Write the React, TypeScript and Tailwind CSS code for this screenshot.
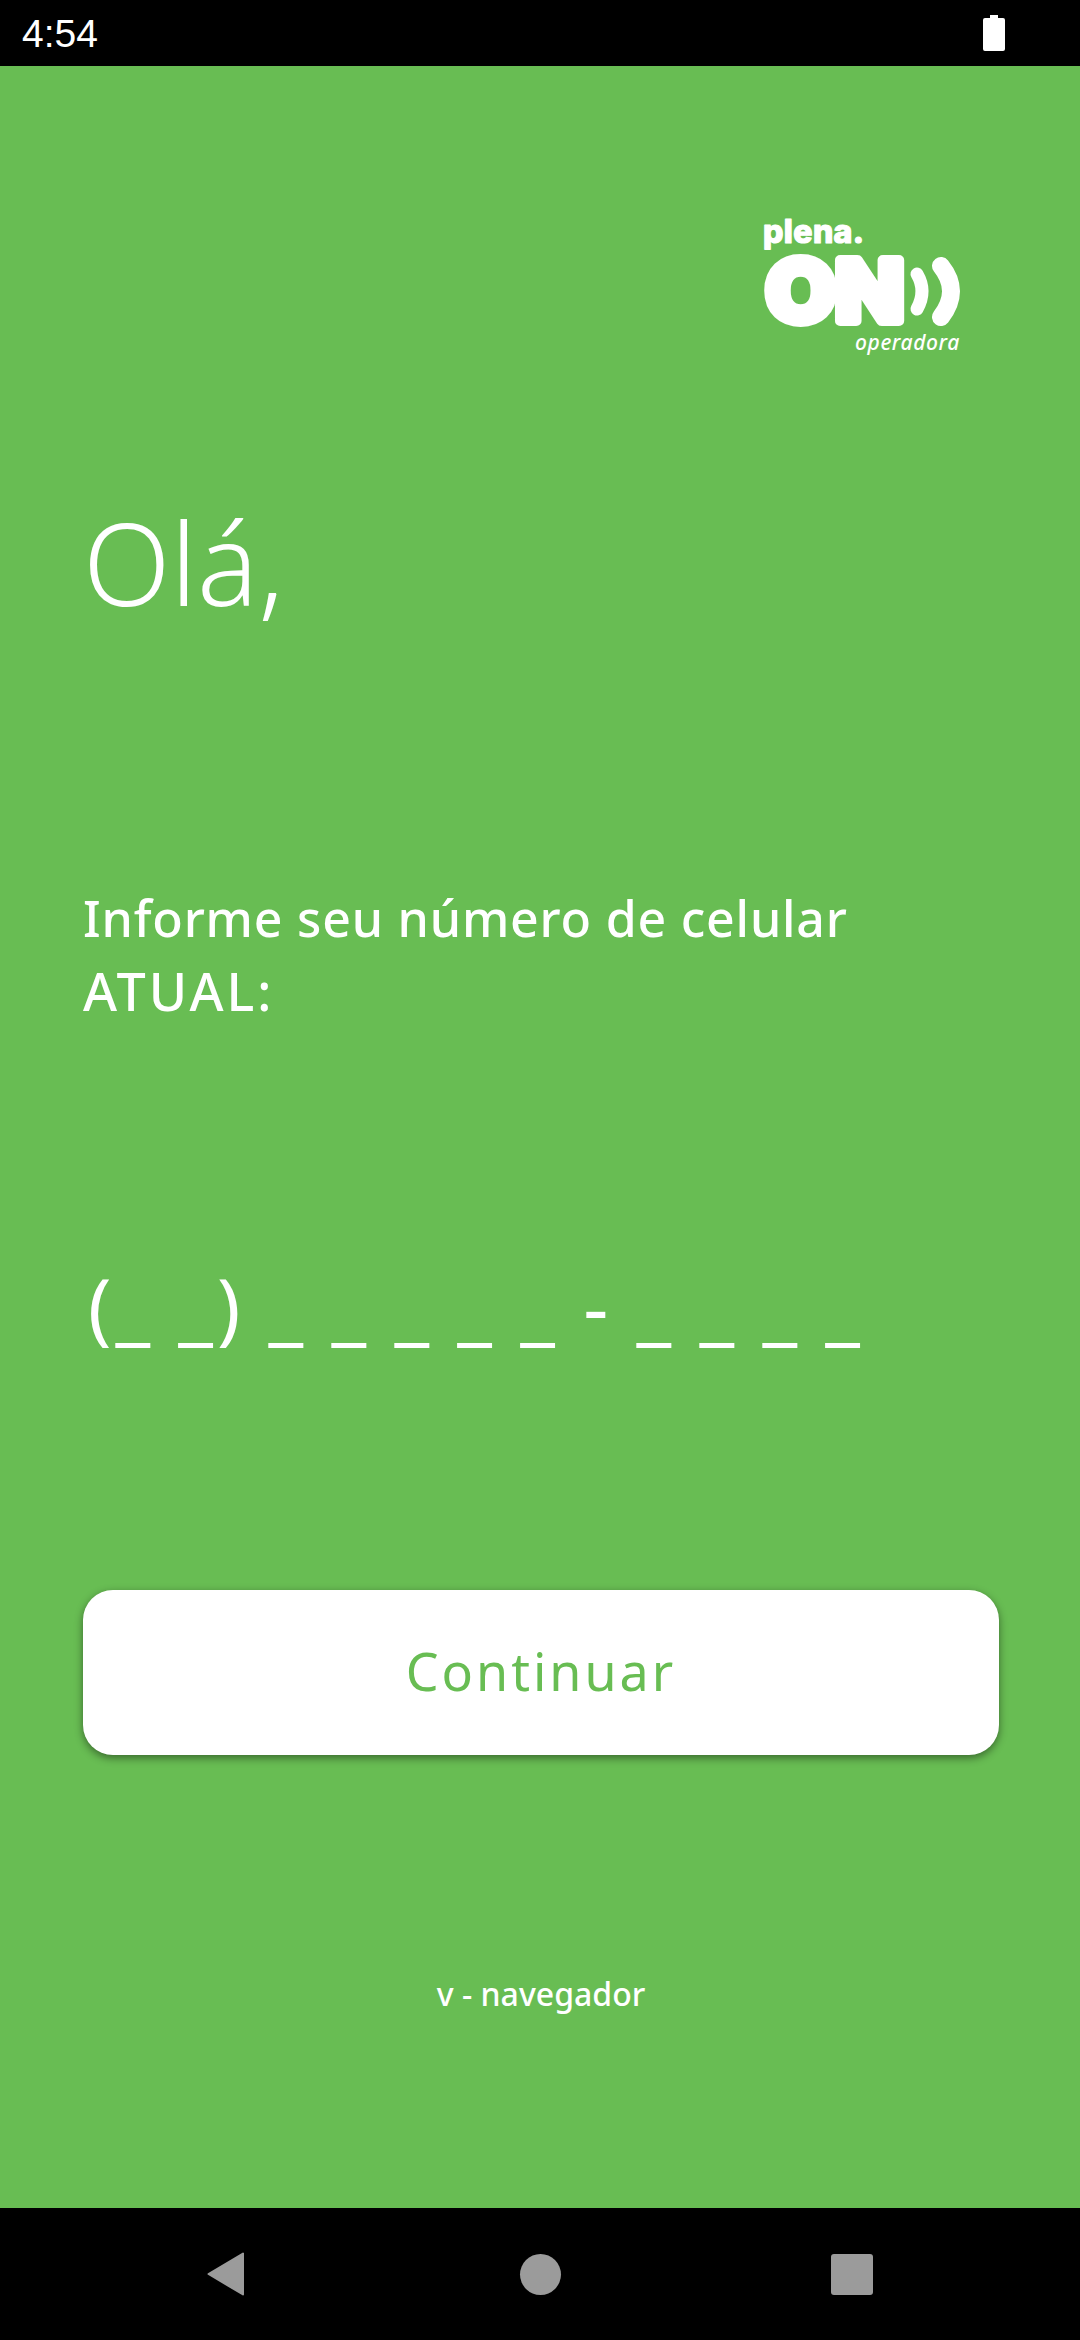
export default function App() {
  return (
    <div className="w-[1080px] h-[2340px] flex flex-col bg-[#68bd53] overflow-hidden" style={{ fontFamily: '"Noto Sans", sans-serif' }}>
      <div className="h-[66px] bg-black flex items-center justify-between pl-[22px] pr-[74px] shrink-0">
        <span className="text-white text-[39px] leading-none" style={{ fontFamily: '"Liberation Sans", sans-serif' }}>4:54</span>
        <svg width="24" height="36" viewBox="0 0 24 36" className="block">
          <path d="M8 0h8v3h5a2 2 0 0 1 2 2v29a2 2 0 0 1-2 2H3a2 2 0 0 1-2-2V5a2 2 0 0 1 2-2h5z" fill="#fff" />
        </svg>
      </div>
      <main className="flex-1 flex flex-col px-[83px] text-white">
        <div className="self-end mr-[37px] mt-[140px] w-[200px] h-[149px]">
          <svg width="200" height="149" viewBox="0 -14 200 149" className="block">
            <text x="3" y="23" fontFamily="Inter, sans-serif" fontWeight="800" fontSize="32" letterSpacing="0.4" fill="#fff" stroke="#fff" strokeWidth="1.2" strokeLinejoin="round">plena.</text>
            <text x="6" y="101" fontFamily="Inter, sans-serif" fontWeight="800" fontSize="84" fill="#fff" stroke="#fff" strokeWidth="10" strokeLinejoin="round" textLength="138" lengthAdjust="spacingAndGlyphs">ON</text>
            <path d="M157 54 Q167 71 157 89" fill="none" stroke="#fff" strokeWidth="13" strokeLinecap="round" />
            <path d="M181 46 Q201 71 181 97" fill="none" stroke="#fff" strokeWidth="18" strokeLinecap="round" />
            <text x="95" y="130" fontFamily="'Noto Sans', sans-serif" fontStyle="italic" fontWeight="500" fontSize="21" letterSpacing="0.6" fill="#fff">operadora</text>
          </svg>
        </div>
        <h1 className="mt-[137px] text-[114px] leading-[140px] font-light">Olá,</h1>
        <p className="mt-[249px] text-[50px] leading-[74px] tracking-[0.8px] font-medium">Informe seu número de celular<br /><span className="text-[52px] leading-[70px] tracking-[3px]">ATUAL:</span></p>
        <div className="mt-[227px] ml-[5px] h-[100px] text-[78px] leading-[100px] whitespace-pre tracking-[4px]">(_ _) _ _ _ _ _ - _ _ _ _</div>
        <button className="mt-[234px] w-[916px] h-[165px] shrink-0 pb-[4px] bg-white rounded-[30px] shadow-[0_3px_8px_rgba(0,0,0,0.45)] text-[#68bd53] text-[52px] tracking-[3px]">Continuar</button>
        <p className="mt-[217px] pl-[2px] text-center text-[32px] leading-[44px] font-medium">v - navegador</p>
      </main>
      <div className="h-[132px] bg-black shrink-0 flex items-center pl-[207px]">
        <svg width="38" height="44" viewBox="0 0 38 44" className="block">
          <path d="M36 1.5 V42.5 L1.5 22 Z" fill="#9b9b9b" stroke="#9b9b9b" strokeWidth="2" strokeLinejoin="round" />
        </svg>
        <div className="ml-[275px] w-[41px] h-[41px] rounded-full bg-[#9b9b9b]" />
        <div className="ml-[270px] w-[42px] h-[41px] rounded-[3px] bg-[#9b9b9b]" />
      </div>
    </div>
  );
}
